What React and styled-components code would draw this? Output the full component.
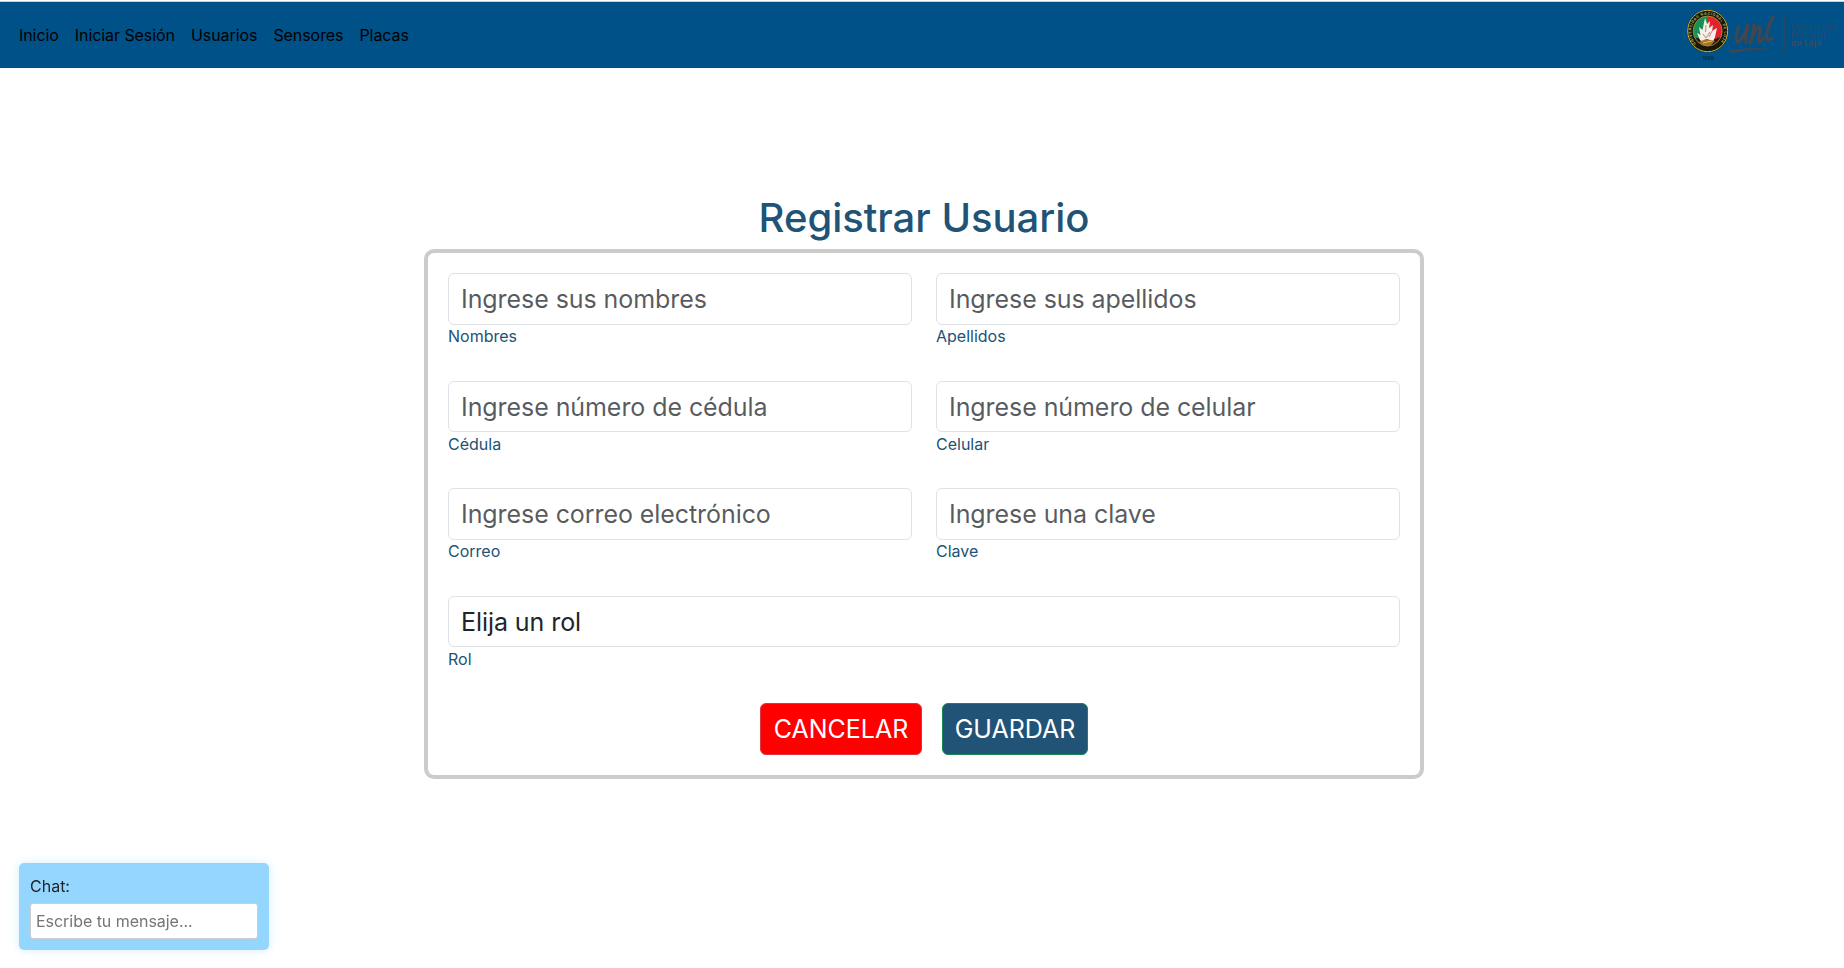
import React from "react";
import styled, { createGlobalStyle } from "styled-components";

const Global = createGlobalStyle`
  *, *::before, *::after { box-sizing: border-box; }
  body {
    margin: 0;
    background: #fff;
    color: #212529;
    font-family: Inter, "Liberation Sans", sans-serif;
    font-size: 16px;
    line-height: 24px;
    overflow: hidden;
  }
  input, select, button { font-family: inherit; margin: 0; }
`;

const Page = styled.div`
  display: flex;
  flex-direction: column;
  height: 968px;
  padding-top: 1px;
`;

const Navbar = styled.nav`
  display: flex;
  align-items: center;
  justify-content: space-between;
  height: 67px;
  flex: none;
  padding: 0 7px 0 19px;
  background: #005187;
  border-top: 1px solid #c9ced2;
`;

const NavLinks = styled.div`
  display: flex;
  gap: 16px;
`;

const NavLink = styled.a`
  color: #000;
  text-decoration: none;
  letter-spacing: -0.07px;
`;

const Logo = styled.svg`
  display: block;
  width: 160px;
  height: 64px;
`;

const Main = styled.main`
  width: 1000px;
  margin: 126px 0 0 424px;
`;

const Title = styled.h1`
  margin: 0 0 7px;
  color: #205375;
  font-size: 40px;
  font-weight: 500;
  line-height: 48px;
  letter-spacing: -0.02px;
  text-align: center;
`;

const Card = styled.form`
  padding: 20px;
  border: 4px solid #ccc;
  border-radius: 10px;
`;

const Fields = styled.div`
  display: grid;
  grid-template-columns: 1fr 1fr;
  column-gap: 24px;
`;

const Field = styled.div`
  display: flex;
  flex-direction: column;
  margin-bottom: 32px;
  grid-column: ${(p) => (p.$wide ? "1 / -1" : "auto")};
`;

const Input = styled.input`
  width: 100%;
  height: 51.5px;
  padding: 6.4px 12px 5.6px;
  border: 1px solid #dee2e6;
  border-radius: 6px;
  background: #fff;
  color: #212529;
  font-size: 25px;
  line-height: 37.5px;
  letter-spacing: -0.07px;
  &::placeholder { color: rgba(33, 37, 41, 0.75); opacity: 1; }
`;

const Select = styled(Input)`
  appearance: none;
  padding: 7.4px 12px 4.6px;
`;

const Label = styled.label`
  margin: -0.2px 0 0.2px;
  color: #205375;
`;

const Actions = styled.div`
  display: flex;
  justify-content: center;
  gap: 20px;
`;

const Button = styled.button`
  width: ${(p) => (p.$danger ? "162px" : "146px")};
  height: 51.5px;
  padding: 7.4px 0 4.6px;
  border: 1px solid ${(p) => (p.$danger ? "#dc3545" : "#198754")};
  border-radius: 6px;
  background: ${(p) => (p.$danger ? "#ff0000" : "#205375")};
  color: #fff;
  font-size: 25px;
  line-height: 37.5px;
`;

const Chat = styled.aside`
  position: fixed;
  left: 19px;
  bottom: 18px;
  width: 250px;
  display: flex;
  flex-direction: column;
  gap: 5px;
  padding: 11px;
  border-radius: 5px;
  background: #95d6ff;
  box-shadow: 0 0 10px rgba(149, 214, 255, 0.4);
`;

const ChatInput = styled.input`
  width: 100%;
  height: 36px;
  padding: 5px;
  border: 1px solid #ccc;
  border-radius: 3px;
  font-size: 16px;
  line-height: 24px;
  letter-spacing: -0.04px;
  &::placeholder { color: #757575; opacity: 1; }
`;

const links = ["Inicio", "Iniciar Sesión", "Usuarios", "Sensores", "Placas"];

const fields = [
  ["Nombres", "Ingrese sus nombres"],
  ["Apellidos", "Ingrese sus apellidos"],
  ["Cédula", "Ingrese número de cédula"],
  ["Celular", "Ingrese número de celular"],
  ["Correo", "Ingrese correo electrónico"],
  ["Clave", "Ingrese una clave"],
];

function UniversityLogo() {
  return (
    <Logo viewBox="0 0 160 64">
      <defs>
        <clipPath id="shield"><ellipse cx="30.7" cy="28" rx="14.5" ry="15" /></clipPath>
        <path id="ring" d="M19 40.6 A16.4 17 0 1 1 42.4 40.6" />
      </defs>
      <ellipse cx="30.7" cy="28" rx="20.6" ry="21.3" fill="#17170b" />
      <ellipse cx="30.7" cy="28" rx="20" ry="20.7" fill="none" stroke="#c9b42f" strokeWidth="1" />
      <text fontSize="3.6" fontWeight="700" fill="#b6ae62">
        <textPath href="#ring" textLength="76">UNIVERSIDAD NACIONAL DE LOJA</textPath>
      </text>
      <g clipPath="url(#shield)">
        <rect x="15" y="12" width="15" height="32" fill="#159056" />
        <rect x="30" y="12" width="17" height="32" fill="#e0232c" />
        <path d="M15 36 Q20 34 24 36 L38 36 Q43 34 47 34 V45 H15Z" fill="#2b1810" />
        <path d="M23 37 L20 30 L23.5 32 L22 24 L25.5 27 L28 15 L30 21 L33 18 L32 25 L36 22 L35 28 L40 25 L38 34 L36 39 L30 36 L26 39Z" fill="#f5efe9" />
        <path d="M26 31 L29 35 L33 29 M29 22 L28.5 29 M35 28 L32 34" stroke="#c07a6c" strokeWidth="0.9" fill="none" />
        <path d="M22 39 L29 36 L38 38 L33 43 L27 43Z" fill="#a97028" />
        <path d="M26 40 L35 38" stroke="#e4c35a" strokeWidth="1" />
      </g>
      <ellipse cx="30.7" cy="28" rx="14.5" ry="15" fill="none" stroke="#c1a53a" strokeWidth="0.7" />
      <text x="25.5" y="57" fontSize="4.8" fontWeight="700" fill="#082c49" textLength="11">1859</text>
      <g fill="none" stroke="#41464f" strokeLinecap="round" strokeLinejoin="round">
        <path strokeWidth="3.4" d="M61.5 24 Q59 32 59.5 38 Q61 41 65 35 Q69 29 71 22 Q68 32 69 39" />
        <path strokeWidth="3.4" d="M77 22 Q76 31 73 40 Q78 27 81 24 Q84.5 22 83 29 Q80 38 82 39 Q84 39 86 35" />
        <path strokeWidth="3.4" d="M96 14 Q90 25 89 35 Q89.5 39 95 35" />
      </g>
      <path d="M53 47.2 Q72 44 93 45.4 Q73 46.2 61 48.3 L75 47.6 Q63 49.5 53.5 49.6 Q50.5 48.4 53 47.2Z" fill="#41464f" />
      <path strokeWidth="0.9" stroke="#30465f" d="M107.7 11 V52.5" />
      <g fontSize="8" fill="#2d4866">
        <text x="114" y="26.5" textLength="45.5">Universidad</text>
        <text x="114" y="34.7" textLength="34">Nacional</text>
        <text x="114" y="42.8" fontWeight="700" fill="#474657" textLength="30">de Loja</text>
      </g>
    </Logo>
  );
}

export default function App() {
  return (
    <Page>
      <Global />
      <Navbar>
        <NavLinks>
          {links.map((l) => <NavLink key={l} href="#">{l}</NavLink>)}
        </NavLinks>
        <UniversityLogo />
      </Navbar>
      <Main>
        <Title>Registrar Usuario</Title>
        <Card>
          <Fields>
            {fields.map(([label, hint]) => (
              <Field key={label}>
                <Input placeholder={hint} />
                <Label>{label}</Label>
              </Field>
            ))}
            <Field $wide>
              <Select as="select"><option>Elija un rol</option></Select>
              <Label>Rol</Label>
            </Field>
          </Fields>
          <Actions>
            <Button type="button" $danger>CANCELAR</Button>
            <Button type="button">GUARDAR</Button>
          </Actions>
        </Card>
      </Main>
      <Chat>
        <span>Chat:</span>
        <ChatInput placeholder="Escribe tu mensaje..." />
      </Chat>
    </Page>
  );
}
